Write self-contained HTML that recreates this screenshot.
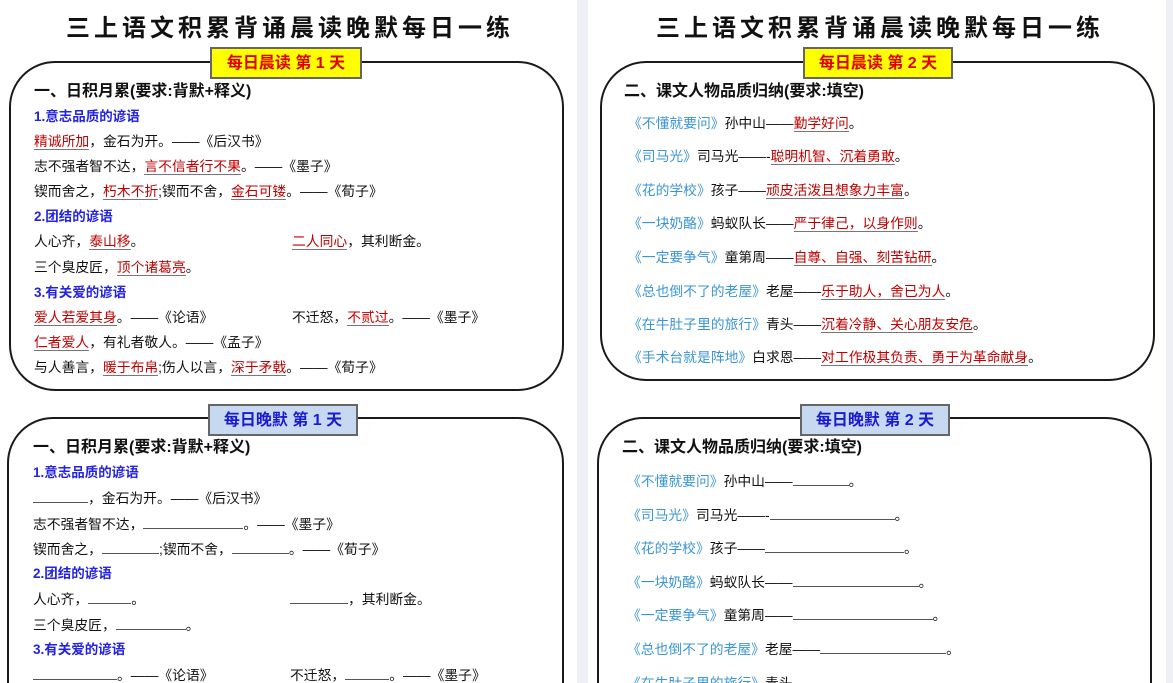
<!DOCTYPE html>
<html><head><meta charset="utf-8"><style>
*{margin:0;padding:0;box-sizing:border-box}
html,body{width:1173px;height:683px;overflow:hidden}
body{background:#fff;position:relative;font-family:"Liberation Sans","Noto Sans CJK SC",sans-serif;color:#111}
#w{position:absolute;left:0;top:0;width:1173px;height:683px;overflow:hidden}
.gap{position:absolute;top:0;height:683px;background:#eef0f5}
.t{position:absolute;top:8px;font-size:24px;font-weight:bold;letter-spacing:4px;white-space:nowrap;color:#111}
.box{position:absolute;border:2px solid #1a1a1a;border-radius:46px;background:#fff}
.bb{border-bottom:0;border-radius:46px 46px 0 0}
.lab{position:absolute;height:32px;font-size:16px;font-weight:bold;text-align:center;line-height:30px;border:2px solid #666;white-space:nowrap}
.y{background:#ffff00;color:#e00000}
.b{background:#c6d9f1;color:#1a1ad0}
.h{position:absolute;font-size:16px;font-weight:bold;white-space:nowrap;line-height:20px}
.l{position:absolute;font-size:13.8px;line-height:16px;white-space:nowrap}
.s{color:#2323e0;font-weight:bold;font-size:13.5px}
.r{color:#c00000;border-bottom:1.5px solid #777}
.k{color:#3a95d5}
.u{display:inline-block;border-bottom:1.5px solid #555;height:13px;vertical-align:baseline}
</style></head><body><div id="w">
<div class="gap" style="left:577px;width:11px"></div>
<div class="gap" style="left:1166px;width:7px"></div>

<!-- LEFT PAGE -->
<div class="t" style="left:66px">三上语文积累背诵晨读晚默每日一练</div>
<div class="box" style="left:9px;top:61px;width:555px;height:330px"></div>
<div class="lab y" style="left:210px;top:47px;width:152px">每日晨读 第 1 天</div>
<div class="h" style="left:34px;top:82px">一、日积月累(要求:背默+释义)</div>
<div class="l s" style="left:34px;top:109px">1.意志品质的谚语</div>
<div class="l" style="left:34px;top:134px"><span class="r">精诚所加</span>，金石为开。——《后汉书》</div>
<div class="l" style="left:34px;top:159px">志不强者智不达，<span class="r">言不信者行不果</span>。——《墨子》</div>
<div class="l" style="left:34px;top:184px">锲而舍之，<span class="r">朽木不折</span>;锲而不舍，<span class="r">金石可镂</span>。——《荀子》</div>
<div class="l s" style="left:34px;top:209px">2.团结的谚语</div>
<div class="l" style="left:34px;top:234px">人心齐，<span class="r">泰山移</span>。</div>
<div class="l" style="left:292px;top:234px"><span class="r">二人同心</span>，其利断金。</div>
<div class="l" style="left:34px;top:260px">三个臭皮匠，<span class="r">顶个诸葛亮</span>。</div>
<div class="l s" style="left:34px;top:285px">3.有关爱的谚语</div>
<div class="l" style="left:34px;top:310px"><span class="r">爱人若爱其身</span>。——《论语》</div>
<div class="l" style="left:292px;top:310px">不迁怒，<span class="r">不贰过</span>。——《墨子》</div>
<div class="l" style="left:34px;top:335px"><span class="r">仁者爱人</span>，有礼者敬人。——《孟子》</div>
<div class="l" style="left:34px;top:360px">与人善言，<span class="r">暖于布帛</span>;伤人以言，<span class="r">深于矛戟</span>。——《荀子》</div>

<div class="box bb" style="left:7px;top:417px;width:557px;height:266px"></div>
<div class="lab b" style="left:208px;top:404px;width:150px">每日晚默 第 1 天</div>
<div class="h" style="left:33px;top:438px">一、日积月累(要求:背默+释义)</div>
<div class="l s" style="left:33px;top:465px">1.意志品质的谚语</div>
<div class="l" style="left:33px;top:490px"><span class="u" style="width:55px"></span>，金石为开。——《后汉书》</div>
<div class="l" style="left:33px;top:516px">志不强者智不达，<span class="u" style="width:100px"></span>。——《墨子》</div>
<div class="l" style="left:33px;top:541px">锲而舍之，<span class="u" style="width:57px"></span>;锲而不舍，<span class="u" style="width:57px"></span>。——《荀子》</div>
<div class="l s" style="left:33px;top:566px">2.团结的谚语</div>
<div class="l" style="left:33px;top:591px">人心齐，<span class="u" style="width:43px"></span>。</div>
<div class="l" style="left:290px;top:591px"><span class="u" style="width:58px"></span>，其利断金。</div>
<div class="l" style="left:33px;top:617px">三个臭皮匠，<span class="u" style="width:70px"></span>。</div>
<div class="l s" style="left:33px;top:642px">3.有关爱的谚语</div>
<div class="l" style="left:33px;top:667px"><span class="u" style="width:84px"></span>。——《论语》</div>
<div class="l" style="left:290px;top:667px">不迁怒，<span class="u" style="width:44px"></span>。——《墨子》</div>

<!-- RIGHT PAGE -->
<div class="t" style="left:656px">三上语文积累背诵晨读晚默每日一练</div>
<div class="box" style="left:600px;top:61px;width:555px;height:320px"></div>
<div class="lab y" style="left:803px;top:47px;width:150px">每日晨读 第 2 天</div>
<div class="h" style="left:624px;top:82px">二、课文人物品质归纳(要求:填空)</div>
<div class="l" style="left:628px;top:116px"><span class="k">《不懂就要问》</span>孙中山——<span class="r">勤学好问</span>。</div>
<div class="l" style="left:628px;top:149px"><span class="k">《司马光》</span>司马光——-<span class="r">聪明机智、沉着勇敢</span>。</div>
<div class="l" style="left:628px;top:183px"><span class="k">《花的学校》</span>孩子——<span class="r">顽皮活泼且想象力丰富</span>。</div>
<div class="l" style="left:628px;top:216px"><span class="k">《一块奶酪》</span>蚂蚁队长——<span class="r">严于律己，以身作则</span>。</div>
<div class="l" style="left:628px;top:250px"><span class="k">《一定要争气》</span>童第周——<span class="r">自尊、自强、刻苦钻研</span>。</div>
<div class="l" style="left:628px;top:284px"><span class="k">《总也倒不了的老屋》</span>老屋——<span class="r">乐于助人，舍已为人</span>。</div>
<div class="l" style="left:628px;top:317px"><span class="k">《在牛肚子里的旅行》</span>青头——<span class="r">沉着冷静、关心朋友安危</span>。</div>
<div class="l" style="left:628px;top:350px"><span class="k">《手术台就是阵地》</span>白求恩——<span class="r">对工作极其负责、勇于为革命献身</span>。</div>

<div class="box bb" style="left:597px;top:417px;width:555px;height:266px"></div>
<div class="lab b" style="left:800px;top:404px;width:150px">每日晚默 第 2 天</div>
<div class="h" style="left:622px;top:438px">二、课文人物品质归纳(要求:填空)</div>
<div class="l" style="left:627px;top:473px"><span class="k">《不懂就要问》</span>孙中山——<span class="u" style="width:56px"></span>。</div>
<div class="l" style="left:627px;top:507px"><span class="k">《司马光》</span>司马光——-<span class="u" style="width:125px"></span>。</div>
<div class="l" style="left:627px;top:540px"><span class="k">《花的学校》</span>孩子——<span class="u" style="width:139px"></span>。</div>
<div class="l" style="left:627px;top:574px"><span class="k">《一块奶酪》</span>蚂蚁队长——<span class="u" style="width:126px"></span>。</div>
<div class="l" style="left:627px;top:607px"><span class="k">《一定要争气》</span>童第周——<span class="u" style="width:140px"></span>。</div>
<div class="l" style="left:627px;top:641px"><span class="k">《总也倒不了的老屋》</span>老屋——<span class="u" style="width:126px"></span>。</div>
<div class="l" style="left:627px;top:676px"><span class="k">《在牛肚子里的旅行》</span>青头——</div>
</div></body></html>
